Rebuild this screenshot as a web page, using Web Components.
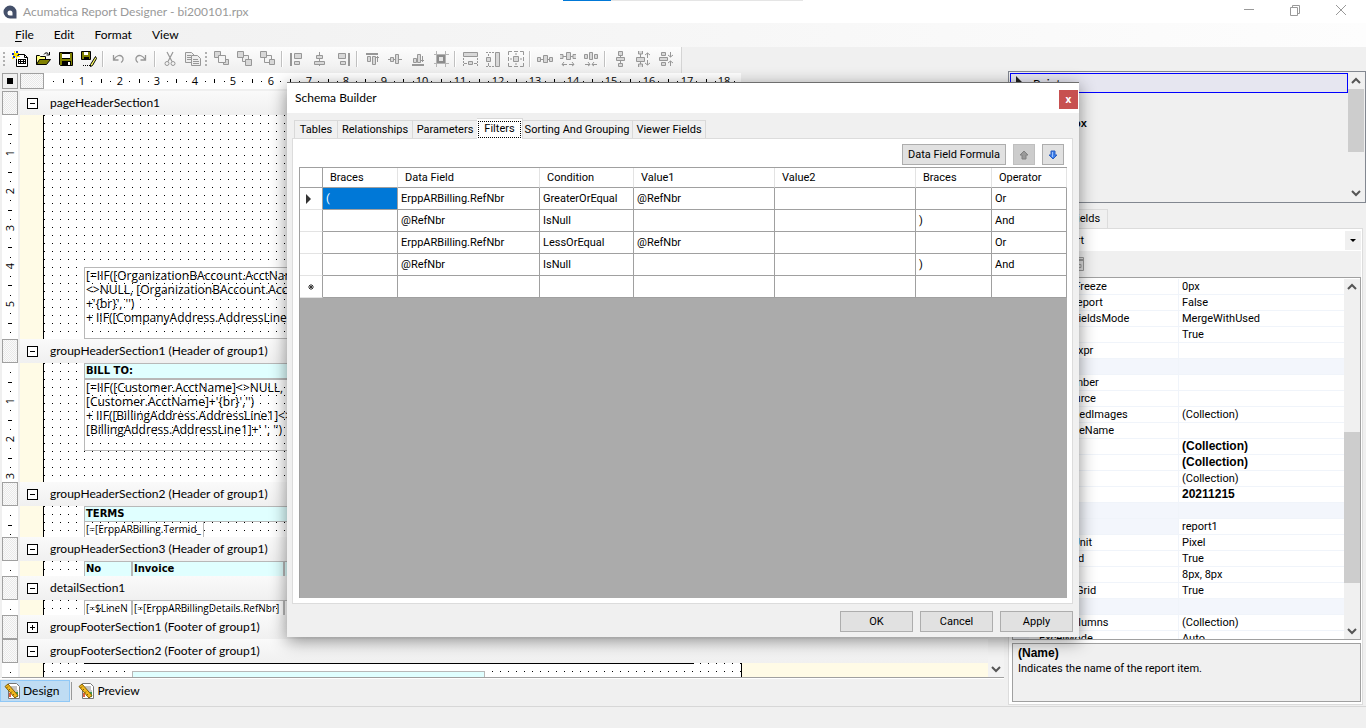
<!DOCTYPE html>
<html lang="en">
<head>
<meta charset="utf-8">
<title>Acumatica Report Designer - bi200101.rpx</title>
<style>
html,body{margin:0;height:100%}
body{font:12px/16px Lato,"Open Sans",sans-serif;color:#000;background:#f0f0f0;overflow:hidden;
  --ui:Roboto,"Liberation Sans",Arial,sans-serif;--line:#a0a0a0;--face:#f0f0f0}
</style>
</head>
<body>
<report-app></report-app>
<script>
function define(name, css, html, setup) {
  customElements.define(name, class extends HTMLElement {
    constructor() {
      super();
      this.attachShadow({mode: 'open'});
    }
    connectedCallback() {
      const body = typeof html === 'function' ? html(this) : html;
      this.shadowRoot.innerHTML = '<style>:host{display:block;box-sizing:border-box}*{box-sizing:border-box}' + css + '</style>' + body;
      if (setup) setup(this);
    }
  });
}

/* ---------- icons, on a 16 unit grid ---------- */
const G = 'fill="none" stroke="#979797"';
const GF = 'fill="#d8d8d8" stroke="#979797"';
const ICONS = {
  new: '<path d="M4.500 3.500h8l3 3v9h-11z" fill="#fff" stroke="#000"/><path d="M12.500 3.500v3h3" fill="none" stroke="#000"/><path d="M6 8h8v5H6z" fill="#000"/><path d="M7 9h1v1H7zM9 9h2v1H9zM12 9h1v1h-1zM7 11h1v1H7zM9 11h2v1H9zM12 11h1v1h-1z" fill="#fff"/><path d="M0 2h2V0h1v2h2V0h1v2h1v1H6v2h2v1H5v2H4V6H2v2H0V6h1V4H0z" fill="#ffe600"/><path d="M0 2h2v2H0zM4 0h2v2H4zM1 5h2v2H1zM5 4h2v1H5z" fill="#1030c0"/>',
  open: '<path d="M1.500 13.500v-9h3l1 1h5v3" fill="#ffff80" stroke="#000"/><path d="M1.500 13.500l3-5h11l-4 5z" fill="#808000" stroke="#000"/><path d="M9 3.500c1-2 3-2 4-1l1 1M14.500 1v3h-3" fill="none" stroke="#000"/>',
  save: '<path d="M1.500 1.500h13v13h-12l-1-1z" fill="#808000" stroke="#000"/><path d="M4 2h8v6H4z" fill="#fff"/><path d="M4 2h8v1H4zM4 7h8v1H4zM4 10h9v5H4z" fill="#000"/><path d="M10 11h2v3h-2z" fill="#fff"/>',
  saveas: '<path d="M.5.5h9v8h-9z" fill="#808000" stroke="#000"/><path d="M3 1h4v3H3z" fill="#fff"/><path d="M3 6h5v3H3z" fill="#000"/><path d="M14.500 5.500l-5 8v2l2-1 4-7z" fill="#ffff60" stroke="#000"/><path d="M2 14h1v1H2zM4 14h1v1H4zM6 14h1v1H6zM8 14h1v1H8z"/>',
  undo: '<path d="M3.500 4v5h5M4 8.500c2-4 6-5 8-3 2 2 1 5-1 6" fill="none" stroke="#979797" stroke-width="1.300"/>',
  redo: '<path d="M12.500 4v5h-5M12 8.500c-2-4-6-5-8-3-2 2-1 5 1 6" fill="none" stroke="#979797" stroke-width="1.300"/>',
  cut: '<path d="M5 1l5 9.500M11 1L6 10.500" fill="none" stroke="#979797" stroke-width="1.200"/><circle cx="5" cy="12.500" r="2" '+G+'/><circle cx="11" cy="12.500" r="2" '+G+'/>',
  copy: '<path d="M.5 1.500h6l3 3v7h-9z" fill="#eee" stroke="#979797"/><path d="M6.500 4.500h6l3 3v7h-9z" fill="#eee" stroke="#979797"/><path d="M2 4.500h4M2 6.500h4M2 8.500h4M8 8.500h5M8 10.500h6M8 12.500h6" '+G+'/>',
  front: '<path d="M.5.5h6v6h-6zM9.500 8.500h5v5h-5z" '+GF+'/><path d="M4.500 4.500h7v7h-7z" fill="#f4f4f4" stroke="#979797"/>',
  middle: '<path d="M5.500 4.500h6v6h-6z" fill="#eee" stroke="#979797"/><path d="M.5.5h6v6h-6zM8.500 8.500h6v6h-6z" '+GF+'/>',
  back: '<path d="M4.500 4.500h7v7h-7z" fill="#f4f4f4" stroke="#979797"/><path d="M.5.5h6v6h-6zM9.500 8.500h5v5h-5z" '+GF+'/>',
  left: '<path d="M2 2v13" '+G+' stroke-width="2"/><path d="M5.500 2.500h7v5h-7zM5.500 10.500h5v3h-5z" '+GF+'/>',
  center: '<path d="M7.500 1v14" '+G+'/><path d="M4.500 4.500h6v3h-6zM2.500 10.500h10v3h-10z" '+GF+'/>',
  right: '<path d="M14 2v13" '+G+' stroke-width="2"/><path d="M3.500 2.500h7v5h-7zM5.500 10.500h5v3h-5z" '+GF+'/>',
  top: '<path d="M2 3h12" '+G+' stroke-width="2"/><path d="M3.500 5.500h3v5h-3zM8.500 5.500h3v8h-3zM13.500 5v6M12 6.500h3" '+GF+'/>',
  vmid: '<path d="M1 8.500h14" '+G+'/><path d="M3.500 6.500h3v4h-3zM8.500 3.500h3v9h-3z" '+GF+'/>',
  bottom: '<path d="M2 14h12" '+G+' stroke-width="2"/><path d="M3.500 7.500h3v4h-3zM7.500 3.500h3v8h-3zM12.500 5v6M11 9.500h3" '+GF+'/>',
  grid: '<path d="M1 3.500h15M1 12.500h15M3.500 0v16M12.500 0v16" fill="none" stroke="#b4b4b4"/><path d="M5 5h6v6H5z" fill="#e4e4e4" stroke="#8c8c8c" stroke-width="2"/>',
  samew: '<path d="M1.500 1.500h14v4h-14zM6.500 10.500h4v3h-4z" '+GF+'/><path d="M1.500 7v8M15.500 7v8" '+G+' stroke-dasharray="2 1"/><path d="M2 12.500h3M12 12.500h3" '+G+'/>',
  sameh: '<path d="M10.500 1.500h4v14h-4zM1.500 6.500h4v4h-4z" '+GF+'/><path d="M1 1.500h8M1 15.500h8" '+G+' stroke-dasharray="2 1"/><path d="M3.500 3v2M3.500 12v3" '+G+'/>',
  same: '<path d="M4 .5H.5V4M12 .5h3.500V4M4 15.500H.5V12M12 15.500h3.500V12M6 .5h4M6 15.500h4M.5 6v4M15.500 6v4" '+G+'/><path d="M5.500 5.500h5v5h-5z" '+GF+'/><path d="M8 2v2M8 12v2M2 8h2M12 8h2" '+G+'/>',
  hsp: '<path d="M.5 6.500h3v4h-3zM6.500 4.500h4v7h-4zM12.500 6.500h3v4h-3zM4 8.500h2M11 8.500h1" '+GF+'/>',
  hinc: '<path d="M0 3.500h3v4H0M6.500 1.500h4v7h-4zM16 3.500h-3v4h3M3 5.500h3M11 5.500h2" '+GF+'/><path d="M2 13.500h5M9 13.500h5M4 11l-2 2.500L4 15M12 11l2 2.500L12 15" '+G+'/>',
  hdec: '<path d="M1.500 3.500h3v4h-3zM6.500 1.500h3v7h-3zM11.500 3.500h3v4h-3z" '+GF+'/><path d="M2 13.500h5M9 13.500h5M5 11l2 2.500L5 15M11 11l-2 2.500L11 15" '+G+'/>',
  vsp: '<path d="M6.500.5h4v4h-4zM4.500 6.500h8v3h-8zM6.500 12.500h4v3h-4zM8.500 5v2M8.500 10v2" '+GF+'/>',
  vinc: '<path d="M3.500 0v3h4V0M1.500 6.500h8v4h-8zM3.500 16v-3h4v3M5.500 3v3M5.500 11v2" '+GF+'/><path d="M12.500 2v5M12.500 9v5M10 4l2.500-2L15 4M10 12l2.500 2 2.500-2" '+G+'/>',
  vdec: '<path d="M3.500 1.500h4v3h-4zM1.500 6.500h8v3h-8zM3.500 11.500h4v3h-4z" '+GF+'/><path d="M12.500 1v5M12.500 10v5M10 4l2.500 2L15 4M10 12l2.500-2 2.500 2" '+G+'/>',
  doc: '<path d="M4.500.5h8l3 3v12h-11z" fill="#fff" stroke="#777"/><path d="M7 4h6M7 6h6M9 8h5" stroke="#888" fill="none"/><path d="M12 9h2v5h-2z" fill="#3a9a50"/><path d="M5 10h2v4H5z" fill="#e06040"/><path d="M1 3.500L4 1l10 11.500-3 2.500z" fill="#f2b71c" stroke="#80600a"/><path d="M4 3.500L2.500 5M6 6L4.500 7.500M8 8.500L6.500 10M10 11l-1.500 1.500" stroke="#80600a" fill="none"/>',
  up: '<path d="M8 4l4 4H10v4H6V8H4z" fill="#9a9a9a" stroke="#808080"/>',
  down: '<path d="M8 12l4-4H10V4H6v4H4z" fill="#3f7fea" stroke="#2a5fc0"/><path d="M7 5h1v5H7z" fill="#9cc4ff"/>',
  chevup: '<path d="M4 10l4-4 4 4" fill="none" stroke="#555" stroke-width="2"/>',
  chevdown: '<path d="M4 6l4 4 4-4" fill="none" stroke="#555" stroke-width="2"/>',
  min: '<path d="M3 7.500h10" stroke="#999"/>',
  restore: '<path d="M3.500 5.500h7v8h-7zM5.500 5v-1.500h7v8H11" fill="none" stroke="#999"/>',
  close: '<path d="M3 3l10 10M13 3L3 13" fill="none" stroke="#999"/>',
  page: '<path d="M1.500 1.500h13v13h-13z" fill="#ddd" stroke="#999"/><path d="M1 3h14v2H1z" fill="#999"/><path d="M9 8.500h3v3H9z" fill="none" stroke="#999"/>',
  pointer: '<path d="M3 1v12l3-3h6z" fill="#222"/>',
  logo: '<path d="M14.500 14.500V8A6.500 6.500 0 1 0 8 14.500z" fill="#44506a"/><path d="M10.500 11.500V9A2.500 2.500 0 1 0 8 11.500z" fill="#fff"/>'
};
define('rd-icon', ':host{display:inline-block;width:16px;height:16px;flex:none}svg{display:block;width:16px;height:16px}',
  el => '<svg viewBox="0 0 16 16" aria-hidden="true">' + ICONS[el.getAttribute('name')] + '</svg>');

/* ---------- window frame ---------- */
define('rd-titlebar', `
:host{display:flex;align-items:center;height:23px;background:#fff;color:#999;padding:0 2px;position:relative}
.t{flex:1;margin-left:5px}
button{width:46px;height:23px;border:0;padding:0 0 3px;background:none;display:grid;place-items:center}
.p{position:absolute;left:563px;top:0;width:240px;height:1px;background:linear-gradient(90deg,#0078d7 20%,#e5e5e5 20%)}`,
`<rd-icon name="logo"></rd-icon><span class="t"><slot></slot></span>
<button aria-label="Minimize"><rd-icon name="min"></rd-icon></button><button aria-label="Restore"><rd-icon name="restore"></rd-icon></button><button aria-label="Close"><rd-icon name="close"></rd-icon></button><span class="p"></span>`);

define('rd-menubar', `
:host{display:flex;height:24px;padding-left:5px;background:linear-gradient(90deg,#f0f0f0,#fdfdfd)}
button{border:0;background:none;font:inherit;color:inherit;padding:0 10px}
u{text-underline-offset:2px}`,
`<button><u>F</u>ile</button><button>Edit</button><button>Format</button><button>View</button>`);

define('rd-toolbar', `
:host{display:flex;height:26px}
.s{display:flex;align-items:center;padding:0 4px 2px 2px;background:linear-gradient(#fdfdfd,#eee);border-right:1px solid #d4d4d4}
button{width:23px;height:22px;border:0;padding:0;background:none;display:grid;place-items:center;flex:none}
i{width:6px;height:16px;flex:none;background:linear-gradient(90deg,#c0c0c0 1px,#fff 1px 2px,transparent 2px) 2px 0 no-repeat}
b{width:6px;height:15px;flex:none;background:repeating-linear-gradient(#b0b0b0 0 2px,transparent 2px 4px) 1px 0/2px 100% no-repeat}`,
'<div class="s">' + '# new open save saveas | undo redo | cut copy # front middle back | left center right | top vmid bottom grid | samew sameh same | hsp hinc hdec | vsp vinc vdec'
  .split(' ').map(n => n === '|' ? '<i></i>' : n === '#' ? '<b></b>' : `<button aria-label="${n}"><rd-icon name="${n}"></rd-icon></button>`).join('') + '</div>');

/* ---------- designer ---------- */
define('rd-ruler', `
:host{background:#fff;overflow:hidden}
svg{display:block}
text{font:11px "Open Sans",sans-serif;text-anchor:middle}`,
el => {
  const v = el.hasAttribute('vertical'), len = +el.getAttribute('length');
  let s = '';
  for (let k = 1; k * 9.45 < len; k++) {
    const p = Math.round(k * 9.45);
    if (k % 4 === 0) s += v ? `<text transform="translate(12 ${p}) rotate(-90)">${k / 4}</text>` : `<text x="${p}" y="12">${k / 4}</text>`;
    else {
      const t = k % 4 === 2 ? 4 : 1, o = k % 4 === 2 ? 6 : 8;
      s += v ? `<rect x="${o}" y="${p}" width="${t}" height="1"/>` : `<rect x="${p}" y="${o}" width="1" height="${t}"/>`;
    }
  }
  return v ? `<svg width="16" height="${len}">${s}</svg>` : `<svg width="${len}" height="16">${s}</svg>`;
});

define('rd-section', `
:host{display:grid;grid-template-columns:16px 1fr;column-gap:2px}
.h{border:1px solid var(--line);height:24px;background:repeating-conic-gradient(#e9e9e9 0 25%,#fafafa 0 50%) 0 0/2px 2px}
.head{height:24px;display:flex;align-items:center;gap:12px;padding-left:7px;background:linear-gradient(#fafafa,#f0f0f0)}
.head button{width:11px;height:11px;padding:0;border:1px solid #000;background:#fff;position:relative}
.head button::before,.plus button::after{content:"";position:absolute;left:2px;top:4px;width:5px;height:1px;background:#000}
.plus button::after{transform:rotate(90deg)}
.body{display:grid;grid-template-columns:23px 699px 1fr;background:#fffbe6}
.canvas{border:solid #000;border-width:0 1px;background:#fff;position:relative;overflow:hidden}
.dots{position:absolute;inset:0;background:conic-gradient(from 270deg at 1px 1px,#000 25%,transparent 0) 0 0/8px 8px}`,
el => {
  const h = +(el.getAttribute('size') || 0);
  return `<div class="h"></div><div class="head ${h ? '' : 'plus'}"><button aria-label="Toggle section"></button><span>${el.getAttribute('label')}</span></div>` +
  (h ? `<rd-ruler vertical length="${h}"></rd-ruler><div class="body" style="height:${h}px"><span></span><div class="canvas"><div class="dots"></div><slot></slot></div></div>` : '');
});

/* report item: x y w h are canvas coordinates */
define('rd-item', `
:host{position:absolute;border:1px solid #b8b8b8;padding:1px 1px 0;white-space:pre;font:12px/14px "Open Sans",sans-serif;overflow:hidden}
:host([fill]){background:#e0ffff;font:bold 10px/14px "DejaVu Sans",sans-serif;padding-top:0}
:host([small]){font-size:10px;padding-top:0}
:host([rule]){border:0;background:#000}`, '<slot></slot>', el => {
  const [x, y, w, h] = el.getAttribute('at').split(' ');
  el.style.cssText = `left:${x}px;top:${y}px;width:${w}px;height:${h}px`;
});

define('rd-scrollbar', `
:host{display:flex;flex-direction:column;justify-content:space-between;width:16px;background:#f0f0f0}
:host([light]){background:#f3f3f3}
span{background:#cdcdcd;flex:0 0 var(--size,0)}
em{flex:0 0 var(--gap,0)}
u{flex:1}`, '<rd-icon name="chevup"></rd-icon><em></em><span></span><u></u><rd-icon name="chevdown"></rd-icon>');

define('rd-designer', `
:host{flex:1;min-height:0;display:flex;flex-direction:column;padding-left:2px;border-bottom:1px solid #fff}
.top{display:flex;gap:2px;height:18px}
.c{width:16px;height:16px;border:1px solid var(--line);display:grid;place-items:center}
.c::after{content:"";width:6px;height:6px;background:#000}
.d{width:24px;height:16px;border:1px solid var(--line);background:repeating-conic-gradient(#e9e9e9 0 25%,#fafafa 0 50%) 0 0/2px 2px}
rd-ruler{width:697px;height:16px;margin-left:-2px}
.main{flex:1;min-height:0;display:flex;overflow:hidden;border-bottom:1px solid var(--line)}
.sections{flex:1;min-width:0;overflow:hidden}`,
`<div class="top"><div class="c"></div><div class="d"></div><rd-ruler length="697"></rd-ruler></div>
<div class="main"><div class="sections">
<rd-section label="pageHeaderSection1" size="224"><rd-item at="40 152 300 72">[=IIF([OrganizationBAccount.AcctName]
&lt;&gt;NULL, [OrganizationBAccount.AcctName]
+'{br}', '')
+ IIF([CompanyAddress.AddressLine1]</rd-item></rd-section>
<rd-section label="groupHeaderSection1 (Header of group1)" size="119"><rd-item fill at="40 0 300 16">BILL TO:</rd-item><rd-item at="40 16 300 72">[=IIF([Customer.AcctName]&lt;&gt;NULL,
[Customer.AcctName]+'{br}','')
+ IIF([BillingAddress.AddressLine1]&lt;&gt;
[BillingAddress.AddressLine1]+' ', '')</rd-item></rd-section>
<rd-section label="groupHeaderSection2 (Header of group1)" size="31"><rd-item fill at="40 0 300 16">TERMS</rd-item><rd-item small at="40 15 120 20">[=[ErppARBilling.Termid_</rd-item></rd-section>
<rd-section label="groupHeaderSection3 (Header of group1)" size="15"><rd-item fill at="40 0 48 18">No</rd-item><rd-item fill at="88 0 152 18">Invoice</rd-item><rd-item fill at="240 0 100 18"></rd-item></rd-section>
<rd-section label="detailSection1" size="15"><rd-item small at="40 0 48 18">[=$LineN</rd-item><rd-item small at="88 0 152 18">[=[ErppARBillingDetails.RefNbr]</rd-item><rd-item at="240 0 100 18"></rd-item></rd-section>
<rd-section label="groupFooterSection1 (Footer of group1)"></rd-section>
<rd-section label="groupFooterSection2 (Footer of group1)" size="15"><rd-item rule at="40 0 610 1"></rd-item><rd-item fill at="88 8 353 18"></rd-item></rd-section>
</div><rd-scrollbar light></rd-scrollbar></div>`);

define('rd-viewtabs', `
:host{display:flex;height:27px;padding-top:1px;align-items:flex-start}
button{display:flex;align-items:center;gap:3px;height:22px;border:1px solid transparent;background:none;font:inherit;padding:0 10px 0 3px}
.on{background:#bfdcf3;border-color:#90c8f6}
i{width:1px;height:18px;background:#999;margin:2px 2px 0 1px}`,
`<button class="on"><rd-icon name="doc"></rd-icon>Design</button><i></i><button><rd-icon name="doc"></rd-icon>Preview</button>`);

/* ---------- right side ---------- */
define('rd-toolbox', `
:host{display:flex;height:132px;border:1px solid #828790;padding:1px;margin-left:4px}
ul{flex:1;margin:0;padding:0;list-style:none;overflow:hidden;font:bold 11px/18px "Liberation Sans",sans-serif}
li{height:20px;display:flex;align-items:center;gap:4px;padding-left:20px}
.on{border:1px solid #00f;background:#e6e6f0;padding-left:2px;font:12px Lato,sans-serif}
rd-scrollbar{--size:63px}`,
`<ul><li class="on"><rd-icon name="pointer"></rd-icon>Pointer</li><li>Label</li><li>Check Box</li><li>Panel</li><li>Line</li><li>Chart</li></ul><rd-scrollbar></rd-scrollbar>`);

const PROPS = [['HeaderFreeze','0px'],['MergeReport','False'],['ViewerFieldsMode','MergeWithUsed'],['Visible','True'],['VisibleExpr',''],null,
['LineNumber',''],['DataSource',''],['EmbeddedImages','(Collection)'],['TemplateName',''],['Styles','(Collection)',1],['Tables','(Collection)',1],['Params','(Collection)'],['Version','20211215',1],null,
['(Name)','report1',0,1],['DesignUnit','Pixel'],['DrawGrid','True'],['Grid','8px, 8px'],['SnapToGrid','True'],null,['ExcelColumns','(Collection)'],['ExcelMode','Auto']];
define('rd-properties', `
:host{flex:1;min-height:0;display:flex;flex-direction:column;font:11px/16px var(--ui);margin-top:6px}
.tabs{display:flex;height:19px;padding-left:6px}
.tabs button{font:inherit;border:1px solid #dcdcdc;border-bottom:0;border-left:0;background:none;padding:0 6px;width:54px}
.tabs button+button{width:44px}
.page{flex:1;min-height:0;border:1px solid #dcdcdc;background:#fff;display:flex;flex-direction:column;margin:0 3px 0 4px;padding:1px 1px 2px 3px}
.combo{display:grid;grid-template-columns:1fr 16px;height:21px}
select{appearance:none;border:0;background:none;font:inherit;padding:0 1px;grid-area:1/1/2/3}
.combo i{grid-area:1/2;background:#f0f0f0;margin:1px 0 1px;display:grid;place-items:center}
.combo i::after{content:"";border:3px solid transparent;border-top-color:#000;border-bottom:0}
.bar{height:26px;background:#f0f0f0;padding:5px 0 0 13px;display:flex;gap:6px}
.bar button{border:0;padding:0;background:none;width:16px;height:16px}
.grid{flex:1;min-height:0;display:flex;border:1px solid var(--line);overflow:hidden;padding-top:1px}
.g{flex:1;overflow:hidden}
table{width:100%;border-collapse:separate;border-spacing:0;table-layout:fixed}
td{padding:0 0 0 3px;height:16px;line-height:15px;border-bottom:1px solid #f0f4fa;white-space:nowrap}
td:first-child{background:#f4f7fc;width:16px}
td:nth-child(2){width:150px;padding-left:10px;border-right:1px solid #f0f4fa}
.cat td,.sel td:nth-child(2){background:#f3f6fc}
.b{font:bold 12px/15px "Liberation Sans",sans-serif}
rd-scrollbar{--gap:137px;--size:151px}
.desc{height:59px;margin-top:3px;border:1px solid var(--line);background:var(--face);padding:1px 5px}
.desc b{display:block;font:bold 12px/16px "Liberation Sans",sans-serif}
.desc span{display:block;line-height:15px}`,
`<div class="tabs"><button>Properties</button><button>Fields</button></div>
<div class="page"><div class="combo"><i></i><select aria-label="Component"><option>report1 Report</option></select></div>
<div class="bar"><button aria-label="Categorized"><rd-icon name="page"></rd-icon></button><button aria-label="Alphabetical"><rd-icon name="page"></rd-icon></button><button aria-label="Pages"><rd-icon name="page"></rd-icon></button></div>
<div class="grid"><div class="g"><table>${PROPS.map(p => p ? `<tr${p[3] ? ' class="sel"' : ''}><td></td><td>${p[0]}</td><td${p[2] ? ' class="b"' : ''}>${p[1]}</td></tr>` : '<tr class="cat"><td></td><td></td><td></td></tr>').join('')}</table></div><rd-scrollbar></rd-scrollbar></div>
<div class="desc"><b>(Name)</b><span>Indicates the name of the report item.</span></div></div>`);

/* ---------- schema builder dialog ---------- */
define('rd-filter-grid', `
:host{flex:1;background:#ababab;border-top:1px solid var(--line);border-left:1px solid var(--line)}
table{border-collapse:separate;border-spacing:0;table-layout:fixed;width:100%}
td,th{height:22px;padding:0 3px;text-align:left;font-weight:normal;background:#fff;border:solid var(--line);border-width:0 1px 1px 0;white-space:nowrap;line-height:16px}
th{height:20px;padding:0 7px;border-right-color:#e3e3e3}
th:first-child{border-right-color:var(--line)}
td:first-child{border-bottom-color:#e3e3e3;padding:0}
.on{background:#0078d7;color:#fff}
svg{display:block;margin:auto}`,
() => {
  const W = [23, 75, 142, 94, 141, 141, 76, 75];
  const rows = [['(','ErppARBilling.RefNbr','GreaterOrEqual','@RefNbr','','','Or'],['','@RefNbr','IsNull','','',')','And'],['','ErppARBilling.RefNbr','LessOrEqual','@RefNbr','','','Or'],['','@RefNbr','IsNull','','',')','And'],['','','','','','','']];
  const mark = i => i === 0 ? '<svg width="10" height="10"><path d="M0 0l5 5-5 5z" fill="#333"/></svg>' : i === 4 ? '<svg width="6" height="6" viewBox="0 0 6 6"><path d="M3 0v6M0 3h6M1 1l4 4M5 1L1 5" stroke="#333"/></svg>' : '';
  return `<table><colgroup>${W.map(w => `<col style="width:${w}px">`).join('')}</colgroup><thead><tr><th></th>${['Braces','Data Field','Condition','Value1','Value2','Braces','Operator'].map(t => `<th>${t}</th>`).join('')}</tr></thead><tbody>${rows.map((r, i) => `<tr><td>${mark(i)}</td>${r.map((c, j) => `<td${!i && !j ? ' class="on"' : ''}>${c}</td>`).join('')}</tr>`).join('')}</tbody></table>`;
});

define('rd-dialog', `
:host{position:absolute;left:287px;top:82px;width:792px;height:555px;display:flex;flex-direction:column;border-top:1px solid #6e6e6e;background:var(--face);box-shadow:0 4px 16px rgba(0,0,0,.45);font:11px/16px var(--ui)}
header{height:30px;background:#fff;display:flex;justify-content:space-between;align-items:center;padding:0 1px 0 8px;font:12px/16px Lato,"Open Sans",sans-serif;flex:none}
header button{width:19px;height:19px;margin-top:3px;background:#c75050;border:0;color:#fff;font:bold 10px/16px "Open Sans",sans-serif;padding:0 0 2px}
.tabs{display:grid;grid-template-columns:44px 75px 65px 44px 111px 73px;align-items:end;height:25px;padding-left:7px;flex:none}
.tabs button{height:18px;font:inherit;border:1px solid #d9d9d9;border-width:1px 1px 0 0;background:none;padding:0;white-space:nowrap}
.tabs button:first-child{border-left-width:1px}
.tabs .on{height:21px;background:#fff;margin:0 -1px -1px;position:relative;padding:1px}
.on span{display:block;height:17px;border:1px dotted #000;line-height:14px}
.page{flex:1;min-height:0;margin:0 6px 0 5px;border:1px solid #dcdcdc;background:#fff;padding:5px 5px 5px 6px;display:flex;flex-direction:column}
.bar{display:flex;justify-content:flex-end;gap:7px;padding:0 3px 2px 0}
.btn{font:inherit;height:21px;border:1px solid #adadad;background:#e1e1e1;padding:0}
.bar .btn{width:22px;display:grid;place-items:center}
.bar .wide{width:104px}
.bar .btn:disabled{background:#ccc;border-color:#bfbfbf}
footer{display:flex;justify-content:flex-end;gap:7px;padding:7px 6px 5px;flex:none}
footer .btn{width:73px}`,
`<header><slot></slot><button aria-label="Close">x</button></header>
<div class="tabs"><button>Tables</button><button>Relationships</button><button>Parameters</button><button class="on"><span>Filters</span></button><button>Sorting And Grouping</button><button>Viewer Fields</button></div>
<div class="page"><div class="bar"><button class="btn wide">Data Field Formula</button><button class="btn" disabled aria-label="Move up"><rd-icon name="up"></rd-icon></button><button class="btn" aria-label="Move down"><rd-icon name="down"></rd-icon></button></div><rd-filter-grid></rd-filter-grid></div>
<footer><button class="btn">OK</button><button class="btn">Cancel</button><button class="btn">Apply</button></footer>`);

define('report-app', `
:host{display:flex;flex-direction:column;height:100vh;position:relative}
main{flex:1;min-height:0;display:grid;grid-template-columns:1fr 362px}
.l,.r{display:flex;flex-direction:column;min-width:0;min-height:0}
.r{padding:24px 0 1px}
footer{height:22px;border-top:1px solid #d7d7d7;flex:none}`,
`<rd-titlebar>Acumatica Report Designer - bi200101.rpx</rd-titlebar><rd-menubar></rd-menubar>
<main><div class="l"><rd-toolbar></rd-toolbar><rd-designer></rd-designer><rd-viewtabs></rd-viewtabs></div>
<div class="r"><rd-toolbox></rd-toolbox><rd-properties></rd-properties></div></main><footer></footer>
<rd-dialog>Schema Builder</rd-dialog>`);
</script>
</body>
</html>
